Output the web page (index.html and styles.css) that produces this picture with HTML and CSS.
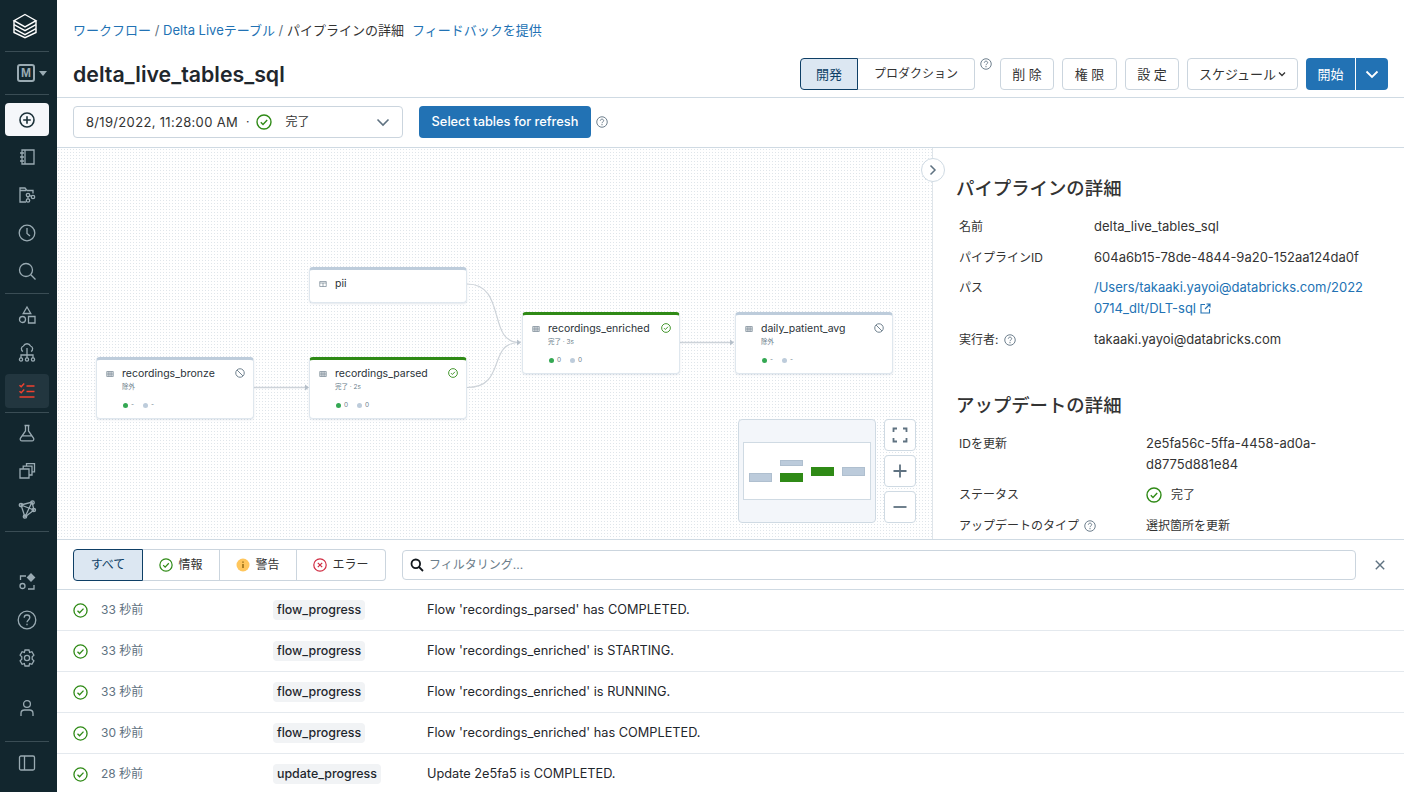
FILE: index.html
```html
<!DOCTYPE html>
<html lang="ja">
<head>
<meta charset="utf-8">
<title>delta_live_tables_sql</title>
<link rel="stylesheet" href="styles.css">
</head>
<body>
<svg class="defs" width="0" height="0">
  <defs>
    <symbol id="ok" viewBox="0 0 16 16"><circle cx="8" cy="8" r="7" fill="none" stroke="currentColor" stroke-width="1.4"/><path d="M4.8 8.2l2.2 2.2 4.2-4.4" fill="none" stroke="currentColor" stroke-width="1.4"/></symbol>
    <symbol id="help" viewBox="0 0 16 16"><circle cx="8" cy="8" r="7" fill="none" stroke="currentColor" stroke-width="1.2"/><path d="M5.8 6.3c0-1.3 1-2.1 2.2-2.1s2.2.8 2.2 2c0 1.700-2.200 1.700-2.200 3.400" fill="none" stroke="currentColor" stroke-width="1.2"/><circle cx="8" cy="11.600" r=".8" fill="currentColor"/></symbol>
    <symbol id="ban" viewBox="0 0 16 16"><circle cx="8" cy="8" r="6.800" fill="none" stroke="currentColor" stroke-width="1.400"/><path d="M3.300 3.300l9.400 9.400" stroke="currentColor" stroke-width="1.400"/></symbol>
    <symbol id="table" viewBox="0 0 16 16"><path d="M1.500 3h13v10h-13zM1.500 6.300h13M1.500 9.700h13M5.800 3v10M10.200 3v10" fill="none" stroke="currentColor" stroke-width="1.200"/></symbol>
    <symbol id="view" viewBox="0 0 16 16"><path d="M1.500 3h13v10h-13zM1.500 6h13M8 6v7" fill="none" stroke="currentColor" stroke-width="1.200"/></symbol>
  </defs>
</svg>
<div class="app">
  <nav class="side">
    <div class="side-logo">
      <svg width="26" height="26" viewBox="0 0 26 26" fill="none" stroke="#fff" stroke-width="1.400"><path d="M13 1.500l11 6.200-11 6.200-11-6.200z"/><path d="M2 8v3.500l11 6.200 11-6.200V8"/><path d="M2 12v3.500l11 6.200 11-6.200V12"/><path d="M2 16v3.500l11 5.200 11-5.200V16"/></svg>
    </div>
    <div class="side-sep"></div>
    <div class="side-user"><span class="m-badge">M</span><span class="m-caret"></span></div>
    <div class="side-sep"></div>
    <div class="side-new"><svg width="18" height="18" viewBox="0 0 18 18" fill="none" stroke="#1b3139" stroke-width="1.600"><circle cx="9" cy="9" r="7"/><path d="M9 5.200v7.600M5.200 9h7.600"/></svg></div>
    <a class="side-item"><svg width="20" height="20" viewBox="0 0 20 20"><path d="M5 3h12v14H5zM8 3v14M3 6h4M3 10h4M3 14h4"/></svg></a>
    <a class="side-item"><svg width="20" height="20" viewBox="0 0 20 20"><path d="M9 17H3V3h5l2 2.500h6v3M3 5.500h6"/><circle cx="11" cy="10" r="1.700"/><circle cx="16" cy="12" r="1.700"/><circle cx="11" cy="15.500" r="1.700"/><path d="M12.500 11l2-.2M11 11.700v2"/></svg></a>
    <a class="side-item"><svg width="20" height="20" viewBox="0 0 20 20"><circle cx="10" cy="10" r="7.800"/><path d="M10 5v5.500l3 2.500"/></svg></a>
    <a class="side-item"><svg width="20" height="20" viewBox="0 0 20 20"><circle cx="9" cy="9" r="6.500"/><path d="M13.800 13.800l4.700 4.700"/></svg></a>
    <div class="side-sep sep-b"></div>
    <a class="side-item"><svg width="20" height="20" viewBox="0 0 20 20"><path d="M10 2l3.800 6.500H6.200z"/><circle cx="5.500" cy="14.500" r="3"/><path d="M11.500 11.500h6.500v6.500h-6.500z"/></svg></a>
    <a class="side-item"><svg width="20" height="20" viewBox="0 0 20 20"><path d="M6 8.500a3 3 0 0 1 .4-5.500 4 4 0 0 1 7.200 0 3 3 0 0 1 .4 5.500M10 5v10M4 15v-3h12v3"/><circle cx="4" cy="16.500" r="1.600"/><circle cx="10" cy="16.500" r="1.600"/><circle cx="16" cy="16.500" r="1.600"/></svg></a>
    <a class="side-item active"><svg width="20" height="20" viewBox="0 0 20 20"><path class="red" d="M2.500 4.200l1.700 1.600 3-3.300M2.500 10.200l1.700 1.600 3-3.300M9.500 5h8M9.500 10.500h8M2.500 16h15"/></svg></a>
    <div class="side-sep sep-c"></div>
    <a class="side-item"><svg width="20" height="20" viewBox="0 0 20 20"><path d="M7.500 2.500h5M8.500 2.500v5.500L3.500 15c-.8 1.500 0 2.800 1.500 2.800h10c1.500 0 2.300-1.300 1.500-2.800l-5-7V2.500M5 12.800h10"/></svg></a>
    <a class="side-item"><svg width="20" height="20" viewBox="0 0 20 20"><path d="M3 8h9v9H3zM6.200 8V5.200h8.800v8.800H12M9.500 5.200V2.600h8v8.200H15"/></svg></a>
    <a class="side-item"><svg width="20" height="20" viewBox="0 0 20 20"><path d="M4 6l11-3 2 8-9 7z"/><path d="M4 6l13 5M15 3l-7 15"/><circle cx="4" cy="6" r="1.700"/><circle cx="15.500" cy="3.500" r="1.700"/><circle cx="16.800" cy="11" r="1.700"/><circle cx="8" cy="17.500" r="1.700"/></svg></a>
    <div class="side-sep sep-d"></div>
    <a class="side-item"><svg width="20" height="20" viewBox="0 0 20 20"><path d="M9 4H3.500v4M11 17h6v-4"/><circle cx="5.500" cy="14" r="2.500"/><path class="solid" d="M14 2l3.500 3.500L14 9l-3.500-3.500z"/></svg></a>
    <a class="side-item"><svg width="20" height="20" viewBox="0 0 20 20"><circle cx="10" cy="10" r="8.800"/><path d="M7.200 7.800C7.200 6 8.500 5 10 5s2.800 1 2.800 2.600c0 2.300-2.800 2.300-2.800 4.600M10 13.800v1.500"/></svg></a>
    <a class="side-item"><svg width="20" height="20" viewBox="0 0 20 20"><path d="M8 2h4l.6 2.400 2.300-.7 2 3.400-1.700 1.700v2.400l1.700 1.700-2 3.400-2.300-.7L12 18H8l-.6-2.400-2.300.7-2-3.400 1.700-1.700V8.800L3.100 7.100l2-3.400 2.300.7z"/><circle cx="10" cy="10" r="2.600"/></svg></a>
    <a class="side-item item-user"><svg width="20" height="20" viewBox="0 0 20 20"><circle cx="10" cy="6" r="3.400"/><path d="M4 18v-2.500c0-2 1.500-3.500 3.500-3.500h5c2 0 3.500 1.500 3.500 3.500V18"/></svg></a>
    <div class="side-sep sep-e"></div>
    <a class="side-item"><svg width="20" height="20" viewBox="0 0 20 20"><rect x="2.500" y="3" width="15" height="14" rx="1.500"/><path d="M7.500 3v14"/></svg></a>
  </nav>

  <main class="main">
    <header class="head">
      <div class="crumbs"><a>ワークフロー</a> <span class="slash">/</span> <a>Delta Liveテーブル</a> <span class="slash">/</span> <span class="cur">パイプラインの詳細</span><a class="feedback">フィードバックを提供</a></div>
      <div class="head-row">
        <h1>delta_live_tables_sql</h1>
        <div class="actions">
          <div class="seg-mode"><button class="mode on">開発</button><button class="mode prod">プロダクション</button></div>
          <svg class="help-up"><use href="#help"/></svg>
          <button class="btn w-del">削 除</button>
          <button class="btn w-perm">権 限</button>
          <button class="btn w-set">設 定</button>
          <button class="btn w-sched">スケジュール<svg width="8" height="6" viewBox="0 0 8 6" fill="none" stroke="#333" stroke-width="1.300"><path d="M1 1.500l3 3 3-3"/></svg></button>
          <div class="start"><button class="start-l">開始</button><button class="start-r"><svg width="14" height="9" viewBox="0 0 14 9" fill="none" stroke="#fff" stroke-width="1.800"><path d="M1.500 1.500L7 7l5.500-5.500"/></svg></button></div>
        </div>
      </div>
    </header>

    <div class="toolbar">
      <div class="run-select">
        <span class="run-date">8/19/2022, 11:28:00 AM</span><span class="dot">·</span>
        <svg class="ok-icon"><use href="#ok"/></svg><span class="run-state">完了</span>
        <svg class="run-caret" width="14" height="9" viewBox="0 0 14 9" fill="none" stroke="#5f7281" stroke-width="1.600"><path d="M1.500 1.500L7 7l5.500-5.500"/></svg>
      </div>
      <button class="primary">Select tables for refresh</button>
      <svg class="help-s"><use href="#help"/></svg>
    </div>

    <div class="middle">
      <section class="canvas">
        <svg class="edges" width="875" height="391" viewBox="0 0 875 391" fill="none" stroke="#cdd3d9" stroke-width="1.200">
          <path d="M197 239.500H250" stroke-width="1.500"/><path d="M248 236.500l4 3-4 3z" fill="#b6c0ca" stroke="none"/>
          <path d="M410 136C450 136 430 194.500 462 194.500"/>
          <path d="M410 239.500C450 239.500 430 194.500 462 194.500"/><path d="M460 191.500l4 3-4 3z" fill="#b6c0ca" stroke="none"/>
          <path d="M623 194.500H675" stroke-width="1.500"/><path d="M673 191.500l4 3-4 3z" fill="#b6c0ca" stroke="none"/>
        </svg>

        <div class="node idle n-bronze">
          <div class="n-top"><svg class="n-ic"><use href="#table"/></svg><span class="n-name">recordings_bronze</span><svg class="n-st st-ban"><use href="#ban"/></svg></div>
          <div class="n-sub">除外</div>
          <div class="n-met"><i class="g"></i><span>-</span><i class="b"></i><span>-</span></div>
        </div>
        <div class="node idle n-pii">
          <div class="n-top"><svg class="n-ic"><use href="#view"/></svg><span class="n-name">pii</span></div>
        </div>
        <div class="node done n-parsed">
          <div class="n-top"><svg class="n-ic"><use href="#table"/></svg><span class="n-name">recordings_parsed</span><svg class="n-st st-ok"><use href="#ok"/></svg></div>
          <div class="n-sub">完了 · 2s</div>
          <div class="n-met"><i class="g"></i><span>0</span><i class="b"></i><span>0</span></div>
        </div>
        <div class="node done n-enriched">
          <div class="n-top"><svg class="n-ic"><use href="#table"/></svg><span class="n-name">recordings_enriched</span><svg class="n-st st-ok"><use href="#ok"/></svg></div>
          <div class="n-sub">完了 · 3s</div>
          <div class="n-met"><i class="g"></i><span>0</span><i class="b"></i><span>0</span></div>
        </div>
        <div class="node idle n-daily">
          <div class="n-top"><svg class="n-ic"><use href="#table"/></svg><span class="n-name">daily_patient_avg</span><svg class="n-st st-ban"><use href="#ban"/></svg></div>
          <div class="n-sub">除外</div>
          <div class="n-met"><i class="g"></i><span>-</span><i class="b"></i><span>-</span></div>
        </div>

        <div class="minimap">
          <div class="mini-view">
            <i class="mm m1"></i><i class="mm m2"></i><i class="mm m3 grn"></i><i class="mm m4 grn"></i><i class="mm m5"></i>
          </div>
        </div>
        <div class="zooms">
          <button class="zbtn"><svg width="16" height="16" viewBox="0 0 16 16" fill="none" stroke="#5f7281" stroke-width="1.800"><path d="M1.500 5V1.500H5M11 1.500h3.500V5M14.500 11v3.500H11M5 14.500H1.500V11"/></svg></button>
          <button class="zbtn"><svg width="16" height="16" viewBox="0 0 16 16" fill="none" stroke="#5f7281" stroke-width="1.800"><path d="M8 1.500v13M1.500 8h13"/></svg></button>
          <button class="zbtn"><svg width="16" height="16" viewBox="0 0 16 16" fill="none" stroke="#5f7281" stroke-width="1.800"><path d="M1.500 8h13"/></svg></button>
        </div>
        <button class="collapse"><svg width="8" height="12" viewBox="0 0 8 12" fill="none" stroke="#5f7281" stroke-width="1.500"><path d="M1.500 1.500L6 6l-4.500 4.500"/></svg></button>
      </section>

      <aside class="panel">
        <h2>パイプラインの詳細</h2>
        <dl class="kv">
          <dt>名前</dt><dd>delta_live_tables_sql</dd>
          <dt>パイプラインID</dt><dd>604a6b15-78de-4844-9a20-152aa124da0f</dd>
          <dt>パス</dt><dd><a class="plink">/Users/takaaki.yayoi@databricks.com/20220714_dlt/DLT-sql <svg class="ext" width="11" height="11" viewBox="0 0 11 11" fill="none" stroke="#2272b4" stroke-width="1.100"><path d="M5 1.500H1v8.500h8.500V6M6.500 1H10v3.500M10 1L5 6"/></svg></a></dd>
          <dt>実行者: <svg class="help-d"><use href="#help"/></svg></dt><dd>takaaki.yayoi@databricks.com</dd>
        </dl>
        <h2 class="h2b">アップデートの詳細</h2>
        <dl class="kv kv2">
          <dt>IDを更新</dt><dd>2e5fa56c-5ffa-4458-ad0a-d8775d881e84</dd>
          <dt>ステータス</dt><dd class="st"><svg class="ok-icon"><use href="#ok"/></svg><span>完了</span></dd>
          <dt>アップデートのタイプ <svg class="help-d"><use href="#help"/></svg></dt><dd class="jp">選択箇所を更新</dd>
        </dl>
      </aside>
    </div>

    <div class="filters">
      <div class="tabs">
        <button class="tab on">すべて</button>
        <button class="tab t-info"><svg class="ok-icon"><use href="#ok"/></svg>情報</button>
        <button class="tab t-warn"><svg width="14" height="14" viewBox="0 0 14 14"><circle cx="7" cy="7" r="6.500" fill="#ffc65c"/><path d="M7 6v4M7 3.500v1.300" stroke="#8a6410" stroke-width="1.400"/></svg>警告</button>
        <button class="tab t-err"><svg width="14" height="14" viewBox="0 0 14 14" fill="none" stroke="#d02c42" stroke-width="1.200"><circle cx="7" cy="7" r="6.200"/><path d="M4.800 4.800l4.400 4.400M9.200 4.800l-4.400 4.400"/></svg>エラー</button>
      </div>
      <div class="search">
        <svg width="14" height="14" viewBox="0 0 14 14" fill="none" stroke="#11171c" stroke-width="1.800"><circle cx="5.800" cy="5.800" r="4.300"/><path d="M9 9l4 4"/></svg>
        <span>フィルタリング...</span>
      </div>
      <button class="clear"><svg width="10" height="10" viewBox="0 0 10 10" fill="none" stroke="#5f7281" stroke-width="1.400"><path d="M.8.800l8.400 8.400M9.200.800L.8 9.200"/></svg></button>
    </div>

    <div class="rows">
      <div class="row"><svg class="ok-icon"><use href="#ok"/></svg><span class="time">33 秒前</span><span class="cell-tag"><span class="tag">flow_progress</span></span><span>Flow 'recordings_parsed' has COMPLETED.</span></div>
      <div class="row"><svg class="ok-icon"><use href="#ok"/></svg><span class="time">33 秒前</span><span class="cell-tag"><span class="tag">flow_progress</span></span><span>Flow 'recordings_enriched' is STARTING.</span></div>
      <div class="row"><svg class="ok-icon"><use href="#ok"/></svg><span class="time">33 秒前</span><span class="cell-tag"><span class="tag">flow_progress</span></span><span>Flow 'recordings_enriched' is RUNNING.</span></div>
      <div class="row"><svg class="ok-icon"><use href="#ok"/></svg><span class="time">30 秒前</span><span class="cell-tag"><span class="tag">flow_progress</span></span><span>Flow 'recordings_enriched' has COMPLETED.</span></div>
      <div class="row"><svg class="ok-icon"><use href="#ok"/></svg><span class="time">28 秒前</span><span class="cell-tag"><span class="tag">update_progress</span></span><span>Update 2e5fa5 is COMPLETED.</span></div>
    </div>
  </main>
</div>
</body>
</html>
```
FILE: styles.css
```css
* { box-sizing: border-box; }
html, body { margin: 0; height: 100%; overflow: hidden; }
body { font: 13px/20px Inter, "Noto Sans CJK JP", sans-serif; color: #11171c; background: #fff; }
button { font: inherit; color: inherit; cursor: pointer; }
.defs { position: absolute; }
.app { display: flex; width: 1412px; height: 792px; }

/* sidebar */
.side { width: 57px; flex: none; background: #12262e; display: flex; flex-direction: column; align-items: flex-start; padding-left: 5px; }
.side-logo { width: 40px; height: 51px; display: flex; align-items: center; justify-content: center; }
.side-sep { width: 44px; height: 1px; background: #3a4d55; flex: none; }
.side-user { height: 42px; width: 44px; display: flex; align-items: center; gap: 4px; padding-left: 12px; }
.m-badge { width: 18px; height: 18px; border: 2px solid #9aabb3; border-radius: 3px; color: #9aabb3; font: 700 12px/14px "Liberation Sans", sans-serif; text-align: center; }
.m-caret { border: 4px solid transparent; border-top: 5px solid #9aabb3; border-bottom: 0; }
.side-new { width: 44px; height: 33px; margin-top: 8px; border-radius: 4px; background: #f5f7fa; display: flex; align-items: center; justify-content: center; }
.side-item { width: 44px; height: 34px; margin-top: 4px; border-radius: 4px; display: flex; align-items: center; justify-content: center; flex: none; }
.side-item svg { fill: none; stroke: #9aabb3; stroke-width: 1.300; }
.side-item svg .red { stroke: #f0402f; stroke-width: 1.500; }
.side-item svg .solid { fill: #9aabb3; }
.side-item.active { background: #22363f; }
.sep-b { margin-top: 5px; }
.sep-c { margin-top: 4px; margin-bottom: -1px; }
.sep-d { margin-top: 5px; margin-bottom: 29px; }
.item-user { margin-top: 16px; }
.sep-e { margin-top: 16px; }

/* main */
.main { width: 1347px; flex: none; display: flex; flex-direction: column; height: 792px; overflow: hidden; }
.head { height: 98px; padding: 20px 16px 0; border-bottom: 1px solid #cfdae3; }
.crumbs { font-size: 13px; line-height: 20px; color: #5f7281; white-space: nowrap; }
.crumbs a { color: #2272b4; }
.crumbs .cur { color: #333; }
.feedback { margin-left: 8px; }
.head-row { display: flex; align-items: center; justify-content: space-between; margin-top: 18px; height: 32px; }
h1 { margin: 0; font-size: 21.300px; font-weight: 600; line-height: 32px; color: #1f272d; }
.actions { display: flex; align-items: flex-start; }
.seg-mode { display: flex; height: 32px; font-size: 13px; }
.mode { height: 32px; border: 1px solid #cbd5de; background: #fff; padding: 0; }
.mode.on { width: 58px; border: 1px solid #0e3f66; border-radius: 4px 0 0 4px; background: #dce7f2; color: #0e3f66; }
.mode.prod { width: 117px; border-left: 0; border-radius: 0 4px 4px 0; color: #333; font-size: 12px; }
.help-up { width: 12px; height: 12px; color: #5f7281; margin: 0 8px 0 5px; }
.btn { height: 32px; border: 1px solid #cbd5de; border-radius: 4px; background: #fff; font-size: 13px; color: #333; padding: 0; margin-right: 8px; }
.w-del { width: 54px; }
.w-perm { width: 55px; }
.w-set { width: 54px; }
.w-sched { width: 111px; display: flex; align-items: center; justify-content: center; gap: 2px; }
.start { display: flex; height: 32px; font-size: 13px; color: #fff; }
.start-l { width: 49px; border: 0; background: #2272b4; color: #fff; border-radius: 4px 0 0 4px; margin-right: 1px; padding: 0; }
.start-r { width: 32px; border: 0; background: #2272b4; border-radius: 0 4px 4px 0; padding: 0; display: flex; align-items: center; justify-content: center; }

.toolbar { height: 50px; flex: none; padding: 0 16px 1px; display: flex; align-items: center; border-bottom: 1px solid #cfdae3; }
.run-select { width: 330px; height: 32px; border: 1px solid #cbd5de; border-radius: 4px; display: flex; align-items: center; padding: 0 12px; font-size: 12px; color: #333; }
.run-date { font-size: 13px; letter-spacing: .32px; white-space: nowrap; }
.dot { margin: 0 7px 0 8px; }
.ok-icon { width: 16px; height: 16px; color: #2f8a16; flex: none; }
.run-state { margin-left: 13px; }
.run-caret { margin-left: auto; }
.primary { height: 32px; width: 172px; margin-left: 16px; border: 0; border-radius: 4px; background: #2272b4; color: #fff; font-size: 12.800px; font-weight: 500; padding: 0; }
.help-s { width: 12px; height: 12px; color: #5f7281; margin-left: 5px; }

.middle { flex: none; height: 392px; display: flex; border-bottom: 1px solid #cfdae3; }
.canvas { position: relative; width: 876px; flex: none; border-right: 1px solid #dfe5ea;
  background-color: #fff;
  background-image: radial-gradient(circle at 1.500px 1.500px, #dfe5ea .8px, transparent .9px);
  background-size: 3px 3px; }
.edges { position: absolute; left: 0; top: 0; }

.node { position: absolute; width: 158px; height: 62px; background: #fff; border: 1px solid #dfe7ee; border-top: 3px solid #bdccdb; border-radius: 4px; box-shadow: 0 1px 2px rgba(80,110,140,.15); padding: 6px 0 0 9px; }
.node.done { border-top-color: #2f8a16; }
.n-bronze { left: 39px; top: 209px; }
.n-pii { left: 252px; top: 119px; height: 36px; }
.n-parsed { left: 252px; top: 209px; }
.n-enriched { left: 465px; top: 164px; }
.n-daily { left: 678px; top: 164px; }
.n-top { display: flex; align-items: center; height: 16px; }
.n-ic { width: 8px; height: 8px; color: #5f7281; flex: none; }
.n-name { margin-left: 8px; font-size: 10.500px; line-height: 16px; color: #2a3238; white-space: nowrap; }
.n-st { position: absolute; right: 8px; top: 8px; width: 10px; height: 10px; }
.st-ban { color: #5f7281; }
.st-ok { color: #2f8a16; }
.n-sub { font-size: 6.500px; line-height: 10px; color: #6b7d8a; margin: 0 0 0 16px; }
.n-met { display: flex; align-items: center; margin: 9px 0 0 17px; font-size: 6.500px; line-height: 8px; color: #6b7d8a; }
.n-met i { width: 5px; height: 5px; border-radius: 50%; flex: none; }
.n-met i.g { background: #34a853; }
.n-met i.b { background: #bdccdb; margin-left: 9px; }
.n-met span { margin-left: 3px; min-width: 2px; }

.minimap { position: absolute; left: 681px; top: 271px; width: 138px; height: 104px; background: #f3f6fa; border: 1px solid #cfdae3; border-radius: 4px; padding: 22px 4px 0; }
.mini-view { position: relative; height: 58px; background: #fff; border: 1px solid #cfdae3; }
.mm { position: absolute; width: 23px; background: #bccbdb; border: 1px solid #afbfcf; }
.mm.grn { background: #2f8a16; border-color: #2f8a16; }
.m1 { left: 5px; top: 30px; height: 9px; }
.m2 { left: 36px; top: 17px; height: 6px; }
.m3 { left: 36px; top: 30px; height: 9px; }
.m4 { left: 67px; top: 24px; height: 9px; }
.m5 { left: 98px; top: 24px; height: 9px; }
.zooms { position: absolute; left: 827px; top: 271px; display: flex; flex-direction: column; gap: 4px; }
.zbtn { width: 32px; height: 32px; background: #fff; border: 1px solid #cfdae3; border-radius: 4px; padding: 0; display: flex; align-items: center; justify-content: center; }
.collapse { position: absolute; right: -13px; top: 10px; width: 24px; height: 24px; border-radius: 50%; background: #fff; border: 1px solid #cfdae3; padding: 0; display: flex; align-items: center; justify-content: center; z-index: 2; }

.panel { width: 471px; flex: none; padding: 28px 25px 0 23px; overflow: hidden; }
h2 { margin: 0; font-size: 18.400px; line-height: 24px; font-weight: 500; color: #333; }
.h2b { margin-top: 43px; }
.kv { display: grid; grid-template-columns: 135px 270px; margin: 16px 0 0 3px; font-size: 13px; line-height: 21px; row-gap: 9.600px; }
.kv dt { color: #333; font-size: 12px; }
.kv dd { margin: 0; color: #333; }
.kv2 { grid-template-columns: 187px 175px; margin-top: 16px; }
.kv .jp, .st span { font-size: 12px; }
.plink { color: #2272b4; word-break: break-all; }
.ext { vertical-align: -1px; }
.help-d { width: 12px; height: 12px; color: #5f7281; vertical-align: -2px; margin-left: 2px; }
.st { display: flex; align-items: center; gap: 9px; }

.filters { height: 50px; flex: none; padding: 0 16px; display: flex; align-items: center; border-bottom: 1px solid #cfdae3; }
.tabs { display: flex; height: 32px; font-size: 12px; }
.tab { height: 32px; width: 77px; border: 1px solid #cbd5de; border-left: 0; background: #fff; color: #333; padding: 0; display: flex; align-items: center; justify-content: center; gap: 5px; }
.tab .ok-icon { width: 14px; height: 14px; }
.tab.on { width: 70px; border: 1px solid #0e3f66; border-radius: 4px 0 0 4px; background: #dce7f2; color: #0e3f66; }
.t-err { width: 89px; border-radius: 0 4px 4px 0; }
.search { margin-left: 16px; flex: 1; height: 30px; border: 1px solid #cbd5de; border-radius: 4px; display: flex; align-items: center; gap: 5px; padding: 0 7px; font-size: 12px; color: #6b7d8a; }
.clear { width: 16px; height: 16px; margin-left: 16px; border: 0; background: none; padding: 0; display: flex; align-items: center; justify-content: center; }

.rows { flex: 1; overflow: hidden; }
.row { height: 41px; border-bottom: 1px solid #e4e9ee; display: flex; align-items: center; padding-left: 16px; font-size: 12.750px; color: #1f272d; }
.row .ok-icon { width: 15px; height: 15px; }
.time { width: 172px; margin-left: 13px; color: #5f7281; font-size: 12px; }
.cell-tag { width: 154px; }
.tag { display: inline-block; background: #f1f3f5; border-radius: 4px; padding: 0 4px; font-size: 12.400px; font-weight: 500; line-height: 20px; color: #1f272d; }
```
